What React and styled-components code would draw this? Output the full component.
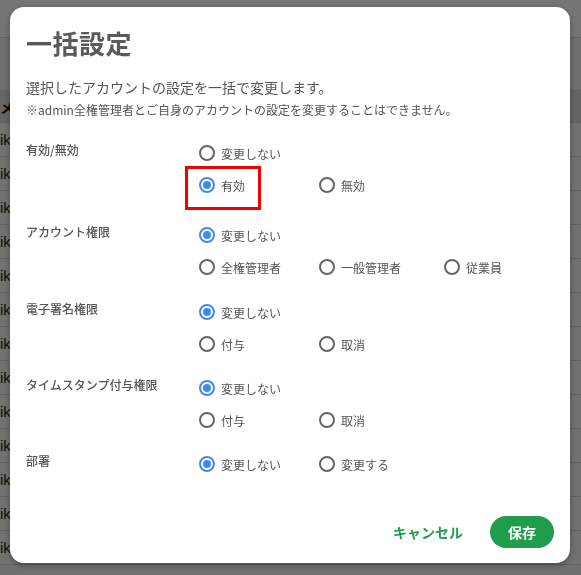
import React from "react";
import styled, { createGlobalStyle } from "styled-components";

const GlobalStyle = createGlobalStyle`
  html, body {
    margin: 0;
    padding: 0;
    height: 100%;
    overflow: hidden;
  }
  body {
    font-family: "Noto Sans CJK JP", "Noto Sans", sans-serif;
    background: #f4f4f4;
  }
`;

const Page = styled.div`
  height: 575px;
  overflow: hidden;
  background: #f4f4f4;
  color: #222;
`;

const TopBar = styled.div`
  height: 37px;
  background: #ffffff;
  border-bottom: 1px solid #d6d6d6;
`;

const Toolbar = styled.div`
  height: 52px;
  background: #f2f2f2;
`;

const TableHead = styled.div`
  height: 31px;
  display: flex;
  align-items: center;
  background: #dcdcdc;
  border-top: 1px solid #cfcfcf;
  border-bottom: 1px solid #cfcfcf;
  font-size: 14px;
  font-weight: 700;
  color: #111;
`;

const TableRow = styled.div`
  height: 33px;
  display: flex;
  align-items: center;
  border-bottom: 1px solid #d2d2d2;
  font-family: "Liberation Sans", sans-serif;
  font-size: 15px;
  color: #1a1a1a;
  background: #f7f7f7;
`;

const Overlay = styled.div`
  position: fixed;
  inset: 0;
  background: rgba(0, 0, 0, 0.54);
  display: flex;
  align-items: flex-start;
  justify-content: flex-start;
  padding: 7px 0 0 10px;
`;

const Modal = styled.div`
  width: 560px;
  box-sizing: border-box;
  background: #fff;
  border-radius: 14px;
  box-shadow: 0 2px 6px rgba(0, 0, 0, 0.35);
  padding: 18px 16px 15px;
  display: flex;
  flex-direction: column;
`;

const Title = styled.h2`
  margin: 0;
  font-size: 26px;
  line-height: 36px;
  font-weight: 700;
  color: #5a5a5a;
  letter-spacing: 0.5px;
`;

const Lead = styled.p`
  margin: 16px 0 0;
  font-size: 14px;
  line-height: 20px;
  color: #555;
`;

const Note = styled.p`
  margin: 4px 0 0;
  font-size: 12px;
  line-height: 18px;
  color: #555;
`;

const Fields = styled.div`
  margin-top: 18px;
  display: flex;
  flex-direction: column;
`;

const Field = styled.div`
  display: grid;
  grid-template-columns: 173px 1fr;
  margin-bottom: ${(p) => (p.$gap !== undefined ? p.$gap : 12)}px;
`;

const FieldLabel = styled.div`
  font-size: 12px;
  line-height: 26px;
  font-weight: 500;
  color: #555;
`;

const Options = styled.div`
  display: flex;
  flex-direction: column;
`;

const OptionRow = styled.div`
  display: grid;
  grid-template-columns: 120px 125px auto;
  height: 32px;
  align-items: center;
`;

const Option = styled.label`
  position: relative;
  display: inline-flex;
  align-items: center;
  gap: 6px;
  font-size: 12px;
  color: #555;
  cursor: pointer;
  justify-self: start;
`;

const Circle = styled.span`
  width: 16px;
  height: 16px;
  box-sizing: border-box;
  border-radius: 50%;
  border: 2px solid ${(p) => (p.$checked ? "#3f8af6" : "#666")};
  display: flex;
  align-items: center;
  justify-content: center;
  flex-shrink: 0;

  &::after {
    content: "";
    width: 8px;
    height: 8px;
    border-radius: 50%;
    background: ${(p) => (p.$checked ? "#3f8af6" : "transparent")};
  }
`;

const Highlight = styled.span`
  position: absolute;
  left: -14px;
  right: -16px;
  top: -11px;
  bottom: -16px;
  border: 3px solid #f00000;
  pointer-events: none;
`;

const Footer = styled.div`
  margin-top: 24px;
  display: flex;
  justify-content: flex-end;
  align-items: center;
  gap: 15px;
`;

const TextButton = styled.button`
  height: 32px;
  padding: 0 12px;
  border: none;
  background: transparent;
  font-family: inherit;
  font-size: 14px;
  font-weight: 700;
  color: #1f9d4c;
  cursor: pointer;
`;

const SaveButton = styled.button`
  width: 64px;
  height: 32px;
  border: none;
  border-radius: 16px;
  background: #1f9d4c;
  font-family: inherit;
  font-size: 14px;
  font-weight: 700;
  color: #fff;
  cursor: pointer;
`;

const Radio = ({ label, checked, highlight }) => (
  <Option>
    <Circle $checked={checked} />
    <span>{label}</span>
    {highlight && <Highlight />}
  </Option>
);

const fields = [
  {
    label: "有効/無効",
    gap: 18,
    rows: [
      [{ label: "変更しない" }],
      [{ label: "有効", checked: true, highlight: true }, { label: "無効" }],
    ],
  },
  {
    label: "アカウント権限",
    gap: 13,
    rows: [
      [{ label: "変更しない", checked: true }],
      [{ label: "全権管理者" }, { label: "一般管理者" }, { label: "従業員" }],
    ],
  },
  {
    label: "電子署名権限",
    rows: [
      [{ label: "変更しない", checked: true }],
      [{ label: "付与" }, { label: "取消" }],
    ],
  },
  {
    label: "タイムスタンプ付与権限",
    rows: [
      [{ label: "変更しない", checked: true }],
      [{ label: "付与" }, { label: "取消" }],
    ],
  },
  {
    label: "部署",
    rows: [[{ label: "変更しない", checked: true }, { label: "変更する" }]],
  },
];

export default function App() {
  return (
    <>
      <GlobalStyle />
      <Page>
        <TopBar />
        <Toolbar />
        <TableHead>メー</TableHead>
        {Array.from({ length: 13 }).map((_, i) => (
          <TableRow key={i}>ik</TableRow>
        ))}
      </Page>
      <Overlay>
        <Modal>
          <Title>一括設定</Title>
          <Lead>選択したアカウントの設定を一括で変更します。</Lead>
          <Note>※admin全権管理者とご自身のアカウントの設定を変更することはできません。</Note>
          <Fields>
            {fields.map((f) => (
              <Field key={f.label} $gap={f.gap}>
                <FieldLabel>{f.label}</FieldLabel>
                <Options>
                  {f.rows.map((row, ri) => (
                    <OptionRow key={ri}>
                      {row.map((o) => (
                        <Radio key={o.label} {...o} />
                      ))}
                    </OptionRow>
                  ))}
                </Options>
              </Field>
            ))}
          </Fields>
          <Footer>
            <TextButton>キャンセル</TextButton>
            <SaveButton>保存</SaveButton>
          </Footer>
        </Modal>
      </Overlay>
    </>
  );
}
